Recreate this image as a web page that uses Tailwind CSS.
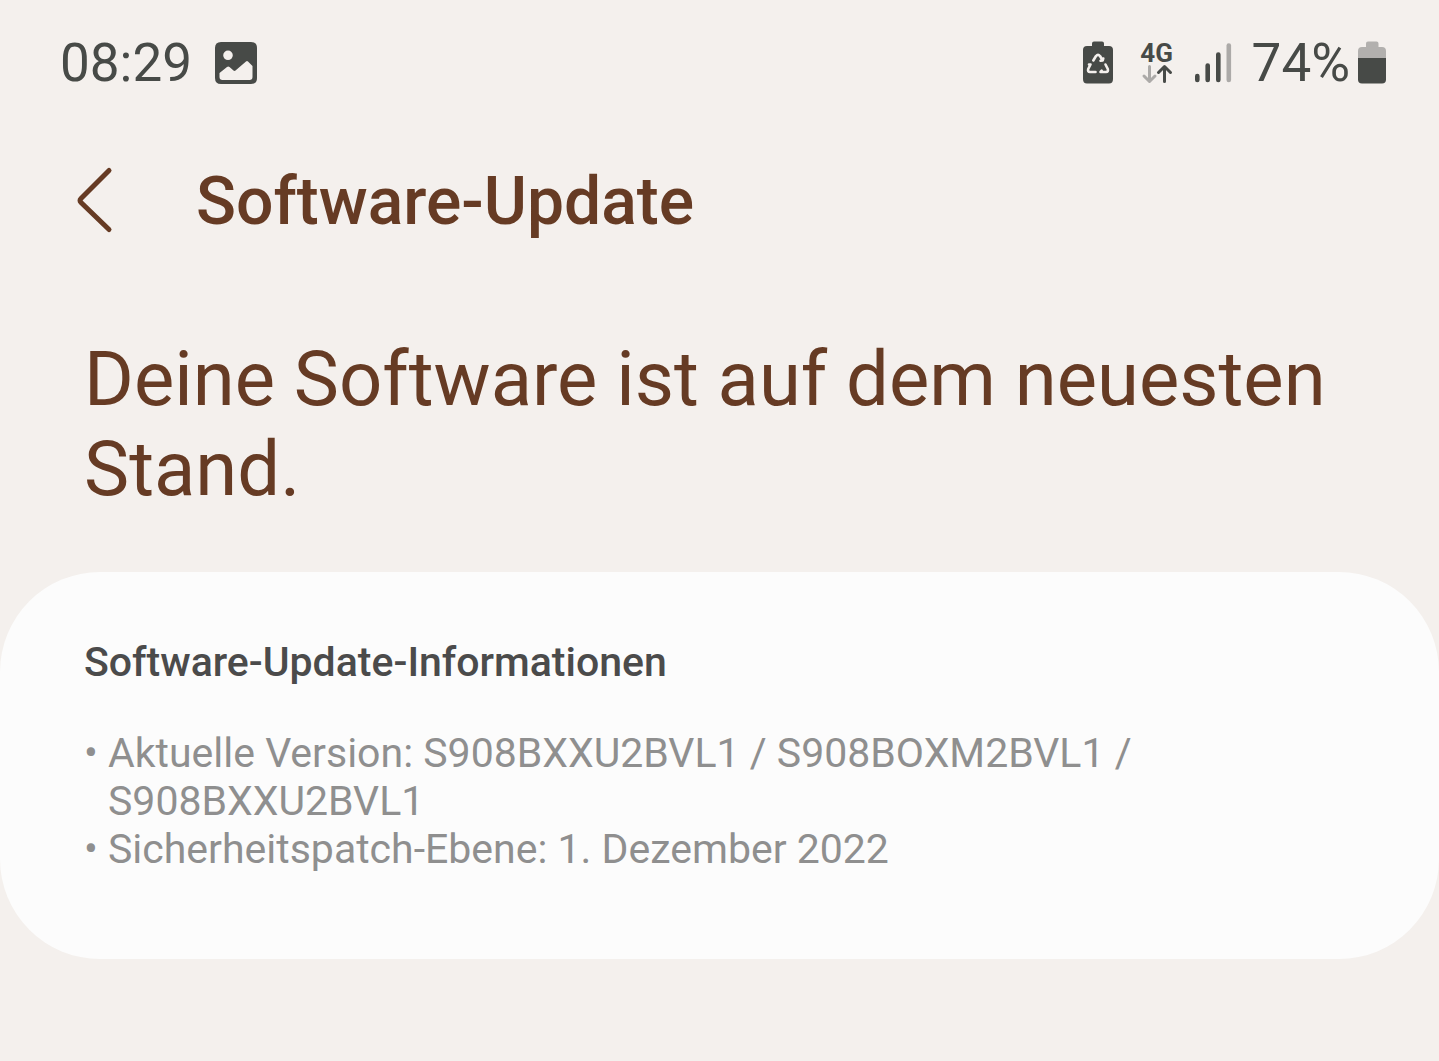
<!DOCTYPE html>
<html lang="de">
<head>
    <meta charset="UTF-8">
    <title>Software-Update</title>
    <meta name="viewport" content="width=device-width, initial-scale=1.0">
    <script src="https://cdn.jsdelivr.net/npm/@tailwindcss/browser@4"></script>
</head>
<body class="bg-[#f4f0ed] min-h-screen font-[Roboto,sans-serif] text-[#663b24]">
    <!-- Status bar -->
    <div class="flex items-center justify-between pl-15 pr-13 pt-8 text-[#474a47]">
        <div class="flex items-center gap-[22px]">
            <span class="text-[53px] leading-[62px]">08:29</span>
            <svg class="w-11 h-11" viewBox="0 0 44 44" fill="currentColor" aria-hidden="true">
                <path fill-rule="evenodd" d="M7 1H37Q43 1 43 7V37Q43 43 37 43H7Q1 43 1 37V7Q1 1 7 1ZM5.500 32V36Q5.500 39 8.500 39H35.500Q38.500 39 38.500 36V25L34 20.500Q33 19.500 32 20.500L21.500 29.500Q20.500 30.300 19.500 29.500L15.500 26Q14.300 25 13 26ZM14 9.500A4.800 4.800 0 1 0 14 19.100A4.800 4.800 0 1 0 14 9.500Z"/>
            </svg>
        </div>
        <div class="flex items-center">
            <!-- Battery protection -->
            <svg class="w-8 h-11" viewBox="0 0 32 44" aria-hidden="true">
                <path fill="currentColor" d="M12 0.500H20Q22 0.500 22 2.500V5H27Q31 5 31 9V38Q31 42.500 27 42.500H5Q1 42.500 1 38V9Q1 5 5 5H10V2.500Q10 0.500 12 0.500Z"/>
                <g fill="none" stroke="#f4f0ed" stroke-width="2.600" stroke-linecap="round" stroke-linejoin="round">
                    <path d="M11.300 19.500L14 15Q16 12.800 18 15L20.700 19.500L18.500 19.800M20.700 19.500L21.300 17.500"/>
                    <path d="M23.500 23.500L25.800 28Q26.500 31 24 31H18.500L19.700 29.700"/>
                    <path d="M13.500 31H8Q5.500 31 6.200 28L8.500 23.500L7 23.500"/>
                </g>
            </svg>
            <!-- Mobile data -->
            <div class="ml-[25px] w-9 flex flex-col items-center">
                <span class="text-[26px] leading-[22px] font-bold">4G</span>
                <svg class="w-9 h-5" viewBox="0 0 36 20" fill="none" stroke-width="3" stroke-linecap="round" stroke-linejoin="round" aria-hidden="true">
                    <path stroke="#acaaa8" d="M10.500 2.500V17M5 12L10.500 17.500L16 12"/>
                    <path stroke="currentColor" d="M25.500 17.500V3M19.500 8.500L25.500 2.500L31.500 8.500"/>
                </svg>
            </div>
            <!-- Signal strength -->
            <svg class="ml-[19px] w-[38px] h-11" viewBox="0 0 38 44" stroke-width="4.600" stroke-linecap="round" aria-hidden="true">
                <path stroke="currentColor" d="M3.300 35V39M13.700 24.500V39M24.300 13.500V39"/>
                <path stroke="#acaaa8" d="M34.800 4.500V39"/>
            </svg>
            <span class="ml-5 text-[53px] leading-[62px]">74%</span>
            <!-- Battery level -->
            <svg class="ml-2 w-[29px] h-11" viewBox="0 0 29 44" aria-hidden="true">
                <path fill="#b2b0ae" d="M10 0.500H18.500Q20.500 0.500 20.500 2.500V6H24Q28 6 28 10V17H0V10Q0 6 4 6H8V2.500Q8 0.500 10 0.500Z"/>
                <path fill="currentColor" d="M0 17H28V38.500Q28 42.500 24 42.500H4Q0 42.500 0 38.500Z"/>
            </svg>
        </div>
    </div>

    <!-- Title bar -->
    <header class="flex items-center pl-19 pt-15">
        <a href="#" aria-label="Zurück" class="block">
            <svg class="w-10 h-18" viewBox="0 -2 40 72" fill="none" stroke="currentColor" stroke-width="5" stroke-linecap="round" stroke-linejoin="round" aria-hidden="true">
                <path d="M33 2.500L5 30.500Q3 32.500 5 34.500L33 61.500"/>
            </svg>
        </a>
        <h1 class="pl-20 text-[66px] leading-[96px] font-medium">Software-Update</h1>
    </header>

    <main>
        <h2 class="px-[84px] pt-[84px] text-[76px] leading-[90px]">Deine Software ist auf dem neuesten Stand.</h2>
        <section class="mt-[58px] rounded-[100px] bg-[#fcfcfc] px-[84px] pt-16 pb-[86px]">
            <h3 class="text-[41px] leading-[52px] font-medium text-[#4b4b4b]">Software-Update-Informationen</h3>
            <ul class="pt-[41px] text-[41px] leading-[48px] text-[#8f8f8f]">
                <li class="flex"><span class="w-6 shrink-0">•</span><span>Aktuelle Version: S908BXXU2BVL1 / S908BOXM2BVL1 / S908BXXU2BVL1</span></li>
                <li class="flex"><span class="w-6 shrink-0">•</span><span>Sicherheitspatch-Ebene: 1. Dezember 2022</span></li>
            </ul>
        </section>
    </main>
</body>
</html>
